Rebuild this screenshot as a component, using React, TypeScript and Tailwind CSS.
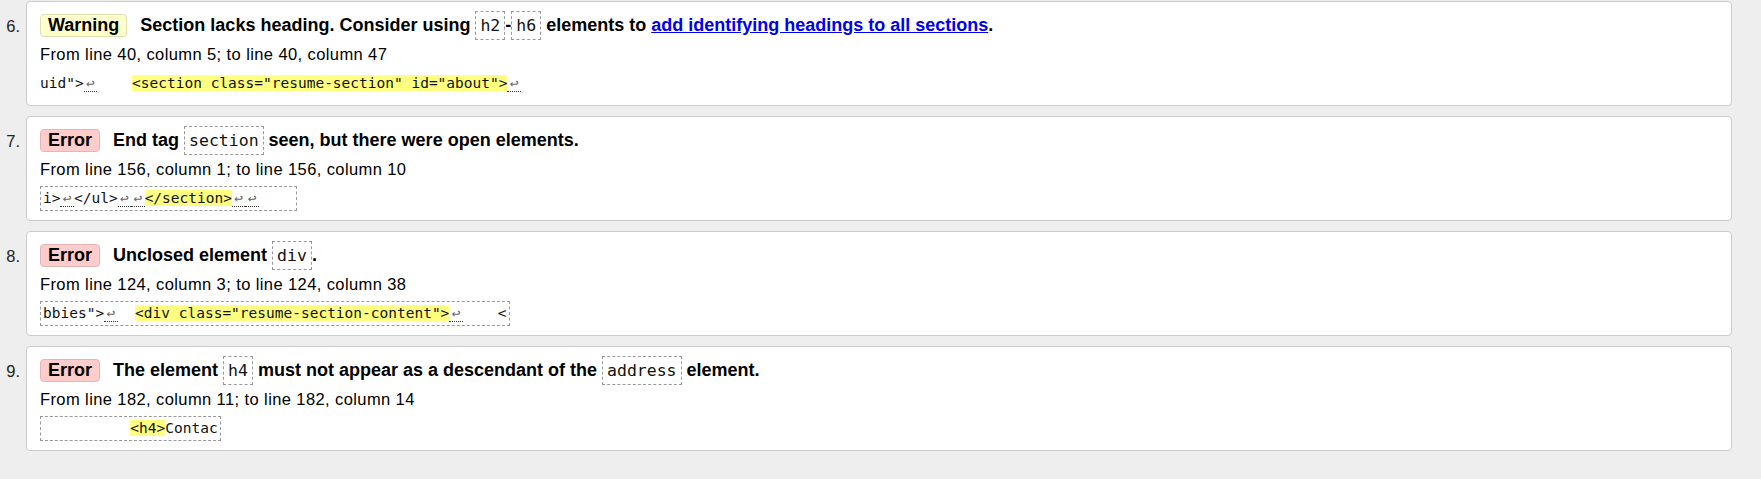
import type { ReactNode } from 'react';

interface Extract {
  before: string;
  mark: string;
  after: string;
  boxed: boolean;
}

interface Message {
  n: number;
  kind: 'Warning' | 'Error';
  text: ReactNode;
  location: string;
  extract: Extract;
}

function Code({ children }: { children: ReactNode }) {
  return (
    <code className="inline-block border border-dashed border-[#999] px-[4px] font-['DejaVu_Sans_Mono',monospace] text-[16.5px] font-normal leading-[27px] text-[#111]">
      {children}
    </code>
  );
}

function LineFeed() {
  return (
    <span className="inline-block w-[13.5px] border-b border-dotted border-[#333] text-center leading-[16px] text-[#666]">
      ↩
    </span>
  );
}

function withLineFeeds(s: string) {
  const parts = s.split('\n');
  return parts.flatMap((part, i) =>
    i < parts.length - 1 ? [part, <LineFeed key={`lf-${i}`} />] : [part],
  );
}

const messages: Message[] = [
  {
    n: 6,
    kind: 'Warning',
    text: (
      <>
        Section lacks heading. Consider using <Code>h2</Code>-<Code>h6</Code> elements to{' '}
        <a href="#" className="text-[#0000ee] underline">
          add identifying headings to all sections
        </a>
        .
      </>
    ),
    location: 'From line 40, column 5; to line 40, column 47',
    extract: {
      before: 'uid">\n    ',
      mark: '<section class="resume-section" id="about">',
      after: '\n',
      boxed: false,
    },
  },
  {
    n: 7,
    kind: 'Error',
    text: (
      <>
        End tag <Code>section</Code> seen, but there were open elements.
      </>
    ),
    location: 'From line 156, column 1; to line 156, column 10',
    extract: { before: 'i>\n</ul>\n\n', mark: '</section>', after: '\n\n    ', boxed: true },
  },
  {
    n: 8,
    kind: 'Error',
    text: (
      <>
        Unclosed element <Code>div</Code>.
      </>
    ),
    location: 'From line 124, column 3; to line 124, column 38',
    extract: {
      before: 'bbies">\n  ',
      mark: '<div class="resume-section-content">',
      after: '\n    <',
      boxed: true,
    },
  },
  {
    n: 9,
    kind: 'Error',
    text: (
      <>
        The element <Code>h4</Code> must not appear as a descendant of the <Code>address</Code> element.
      </>
    ),
    location: 'From line 182, column 11; to line 182, column 14',
    extract: { before: '          ', mark: '<h4>', after: 'Contac', boxed: true },
  },
];

export default function App() {
  return (
    <div className="min-h-screen bg-[#eeeeee] pt-[1px] pr-[29px] font-['Liberation_Sans',Arial,sans-serif] text-black">
      <ol>
        {messages.map((m) => (
          <li key={m.n} className="mb-[10px] flex">
            {/* list number */}
            <div className="w-[26px] shrink-0 pt-[11px] pr-[6px] text-right text-[16.5px] leading-[29px] text-[#222]">
              {m.n}.
            </div>

            <div className="flex-1 rounded-[4px] border border-[#cccccc] bg-white px-[13px] pt-[9px] pb-[9px]">
              <p className="h-[29px] text-[18px] leading-[29px] font-bold whitespace-nowrap">
                <strong
                  className={`mr-[8px] inline-block rounded-[4px] border px-[7px] leading-[21px] ${
                    m.kind === 'Warning'
                      ? 'border-[#dedeb0] bg-[#ffffcc]'
                      : 'border-[#e3b5b5] bg-[#ffcccc]'
                  }`}
                >
                  {m.kind}
                </strong>{' '}
                {m.text}
              </p>

              <p className="mt-[4px] text-[16.5px] leading-[20px] tracking-[0.4px]">{m.location}</p>

              <div className="mt-[7px] h-[25px]">
                <code
                  className={`inline-block border border-dashed font-['DejaVu_Sans_Mono',monospace] text-[14.5px] leading-[23px] whitespace-pre text-[#111] ${
                    m.extract.boxed ? 'border-[#999] px-[2px]' : 'border-transparent px-0 -ml-[1px]'
                  }`}
                >
                  {withLineFeeds(m.extract.before)}
                  <b className="bg-[#ffff80] font-normal">{m.extract.mark}</b>
                  {withLineFeeds(m.extract.after)}
                </code>
              </div>
            </div>
          </li>
        ))}
      </ol>
    </div>
  );
}
